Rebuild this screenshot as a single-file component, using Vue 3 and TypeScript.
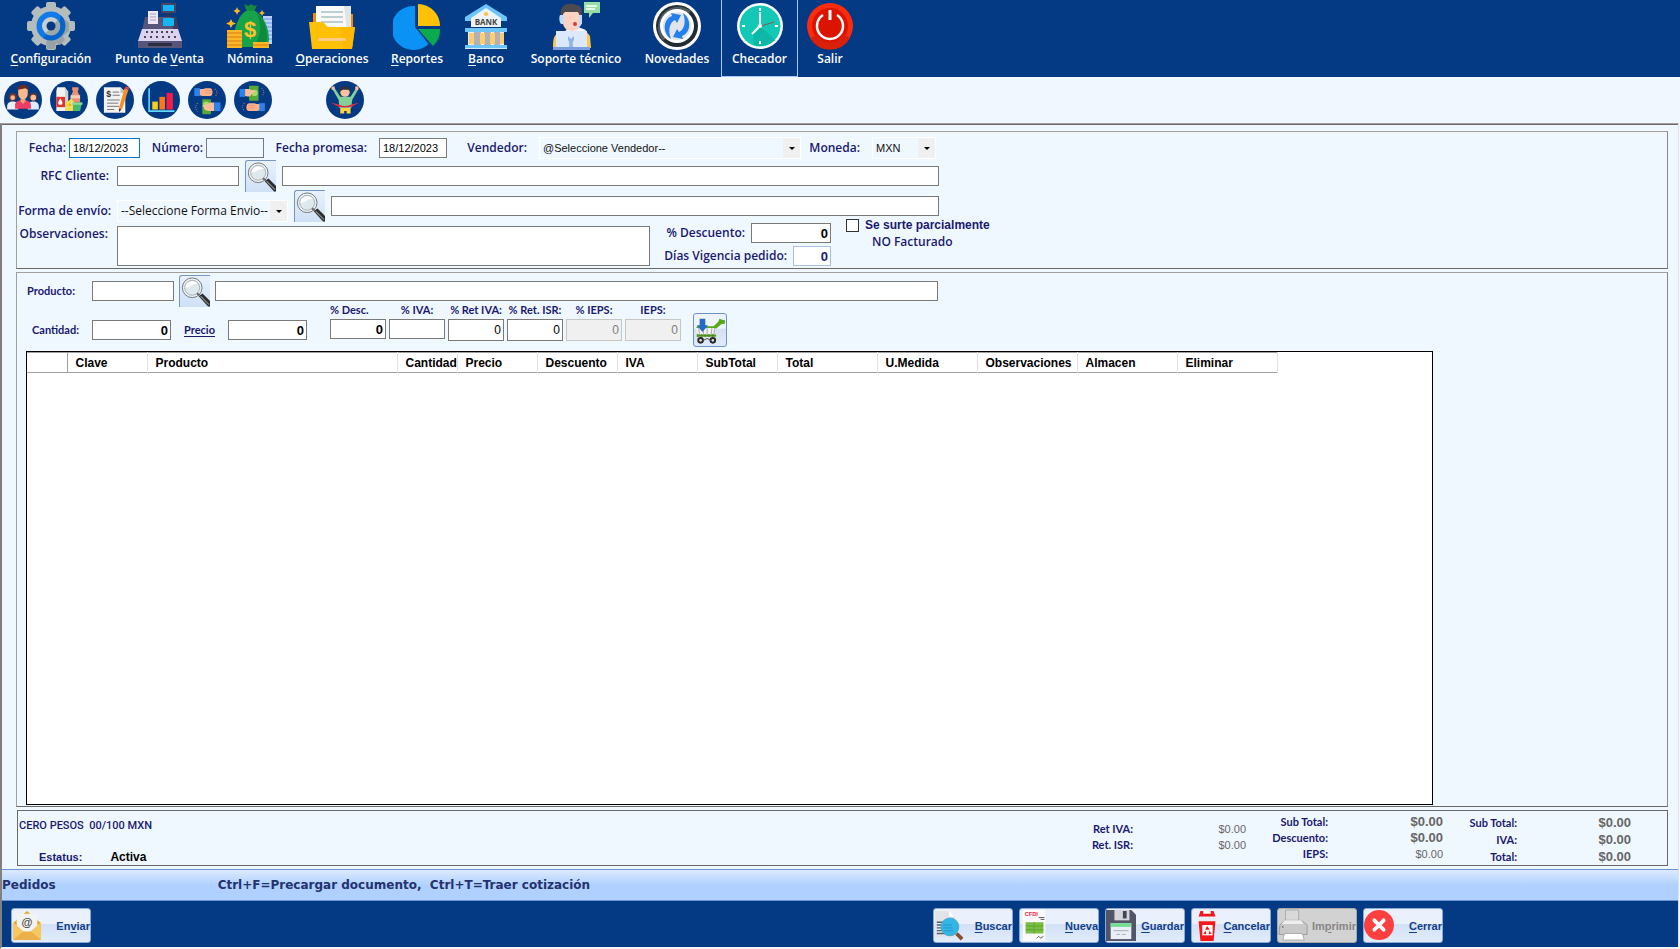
<script setup lang="ts">
import { ref } from 'vue'

interface MenuItem { pre: string; key: string; post: string; icon: string; active?: boolean }
interface ActionItem extends MenuItem { disabled?: boolean }

const icons: Record<string, string> = {
  gear: `<g fill="#b4bdbd"><circle cx="24" cy="24" r="20"/><rect x="19" y="0" width="10" height="48" rx="2"/><rect x="19" y="0" width="10" height="48" rx="2" transform="rotate(45 24 24)"/><rect x="19" y="0" width="10" height="48" rx="2" transform="rotate(90 24 24)"/><rect x="19" y="0" width="10" height="48" rx="2" transform="rotate(135 24 24)"/></g><path d="M33 13l9 8v8l-6 5 2 4-5 5-4-2-1 6h-8l-1-7z" fill="#98a3a5"/><circle cx="24" cy="24" r="14.500" fill="#1279e8"/><path d="M34 13.500A14.500 14.500 0 0 1 16 36l6-6 9-2 1-7z" fill="#0563c9"/><circle cx="24" cy="24" r="9" fill="#c9cfd0"/><path d="M30.500 18A9 9 0 0 1 18 31l4-3 4-5z" fill="#9ca7a9"/><circle cx="24" cy="24" r="4.500" fill="#053a82"/>`,
  register: `<rect x="25" y="1" width="15" height="10" rx="1" fill="#48455f"/><rect x="27" y="3" width="11" height="6" fill="#11b6fb"/><rect x="31" y="11" width="3" height="5" fill="#353247"/><path d="M9 15h31l2 14H6z" fill="#57557a"/><path d="M35 15h5l3 13h-6z" fill="#3f3c58"/><rect x="12" y="9" width="10" height="13" fill="#ece6f6"/><path d="M14 12h6M14 15h6M14 18h6" stroke="#a79fc2"/><rect x="27" y="16" width="11" height="8" rx="1" fill="#11b6fb"/><path d="M6 27h36l4 12H2z" fill="#dcd3ee"/><g fill="#48455f"><path d="M10 29h2v2h-2zM15 29h2v2h-2zM20 29h2v2h-2zM25 29h2v2h-2zM30 29h2v2h-2zM35 29h2v2h-2zM8 34h2v2H8zM14 34h2v2h-2zM20 34h2v2h-2zM26 34h2v2h-2zM32 34h2v2h-2zM38 34h2v2h-2z"/></g><path d="M2 39h44v7H2z" fill="#57557a"/><rect x="12" y="41" width="24" height="3" rx="1" fill="#2f2c42"/>`,
  money: `<g fill="#b9d2ff"><path d="M37 14h9v28h-9z"/></g><path d="M37 17h9M37 21h9M37 25h9M37 29h9M37 33h9M37 37h9" stroke="#6b97e8"/><path d="M18 2l4 2 3-2 3 2 3-1-3 7h-7z" fill="#138a3c"/><path d="M20 9h9c8 4 14 16 14 28 0 6-4 8-9 8H16c-6 0-8-3-8-9 0-11 5-23 12-27z" fill="#17a34a"/><path d="M30 10c7 5 11 15 11 26 0 5-3 8-7 9h-8c9-8 11-22 4-35z" fill="#0d8a3b"/><text x="24" y="35" text-anchor="middle" font-family="Liberation Sans" font-weight="700" font-size="22" fill="#fdc12e">$</text><g fill="#fbb824"><path d="M1 28h15v18H1zM27 40h16v6H27z"/><path d="M5 17l1.500 3L10 21.500 6.500 23 5 26l-1.500-3L0 21.500 3.500 20zM11 5l1 2.500L14.500 9 12 10.500 11 13l-1-2.500L7.500 9 10 7.500zM36 8l1 2 2 1-2 1-1 2-1-2-2-1 2-1z"/></g><path d="M1 31h15M1 35h15M1 39h15M1 43h15M27 43h16" stroke="#e2761b"/>`,
  folder: `<path d="M5 11h8v15H5zM36 12h9v15h-9z" fill="#f58a00"/><path d="M8 4h34v30H8z" fill="#fafafa"/><path d="M36 4h7v26h-4z" fill="#dfe5e5"/><path d="M13 10h22M13 15h22M13 20h22" stroke="#a7c3c4" stroke-width="1.500"/><path d="M1 20h14l5 5h27l-3 22H4z" fill="#fec107"/><path d="M32 25h15l-3 22h-8z" fill="#fdb900"/><rect x="10" y="36" width="28" height="3" rx="1" fill="#ffc987"/>`,
  pie: `<path d="M22 4a22 22 0 1 0 13.500 38L22 25z" fill="#0a92f5"/><path d="M25 2a22 22 0 0 1 22 22H25z" fill="#ffc107"/><path d="M25 27h22a22 22 0 0 1-7 17z" fill="#0aab4e"/>`,
  bank: `<path d="M24 2L3 15v4h42v-4z" fill="#6dc5fa"/><path d="M24 6L9 16v9h30v-9z" fill="#f0f3f5"/><circle cx="24" cy="12" r="2" fill="#f9c23b"/><text x="24" y="23" text-anchor="middle" font-family="Open Sans" font-weight="700" font-size="8" fill="#444">BANK</text><path d="M3 26h42v4H3z" fill="#6dc5fa"/><path d="M6 30h36v13H6z" fill="#eee"/><path d="M12 30h7v13h-7zM22 30h7v13h-7zM32 30h6v13h-6z" fill="#b4b0b4"/><path d="M7 31h5v11H7zM18 31h5v11h-5zM28 31h5v11h-5zM38 31h4v11h-4z" fill="#fbcf70"/><path d="M3 43h42v3H3z" fill="#6dc5fa"/><path d="M3 46h42v1H3z" fill="#cfeaff"/>`,
  support: `<path d="M32 0h16v11h-7l-4 5v-5h-5z" fill="#98dda6"/><path d="M34 4h11M34 7h9" stroke="#fff" stroke-width="1.500"/><path d="M5 32l10-4h18l5 6 1 12H1c0-6 0-12 4-14z" fill="#fbc94f"/><path d="M14 25h12l8 3-5 6H15z" fill="#f5f5fa"/><path d="M11 8c2-5 16-6 17 2v12c0 5-4 7-8 7s-9-3-9-8z" fill="#ffd3c2"/><path d="M9 14C7 0 20 1 24 3c6 0 7 6 5 13l-3-6H13z" fill="#4d4a50"/><path d="M8 13h4v9H9c-2-2-2-7-1-9zM27 13h3v9h-3z" fill="#c2dcff"/><path d="M29 20c0 4-3 5-6 5" stroke="#c2dcff" stroke-width="1.500" fill="none"/><circle cx="23" cy="22" r="2" fill="#d43c47"/><path d="M4 29h31v16H4z" fill="#dce8fb"/><path d="M16 34v4c2 2 1 5 1 8h4c0-3-1-6 1-8v-4l-3 3z" fill="#8fb4ee"/><path d="M1 45h37v3H1z" fill="#7c9fe0"/>`,
  news: `<circle cx="24" cy="24" r="24" fill="#fff"/><circle cx="24" cy="24" r="21" fill="#222c33"/><path d="M8 14A21 21 0 0 1 38 9L10 39A21 21 0 0 1 8 14z" fill="#4e5c60"/><circle cx="24" cy="24" r="17" fill="#fff"/><circle cx="24" cy="24" r="14" fill="#e1e5e9"/><g fill="#2480ed"><path d="M18 37C9 31 10 17 19 14l-1-3 10 2-4 8-2-3c-6 3-7 11-4 19z"/><path d="M30 11c9 6 8 20-1 23l1 3-10-2 4-8 2 3c6-3 7-11 4-19z"/></g>`,
  clock: `<circle cx="24" cy="24" r="23" fill="#fff"/><circle cx="24" cy="24" r="20.500" fill="#13c9b5"/><path d="M24 24L39 38A20.500 20.500 0 0 1 18 43l-1-12z" fill="#0eb8a7"/><path d="M24 6v3M24 39v3M6 24h3M39 24h3" stroke="#fff" stroke-width="2"/><path d="M24 10v14l-8 8" stroke="#fff" stroke-width="2" fill="none"/><path d="M22 25l16-5" stroke="#7c5a50"/><circle cx="24" cy="24" r="2" fill="#fff"/>`,
  power: `<circle cx="24" cy="24" r="23" fill="#fb2c0c"/><circle cx="24" cy="24" r="18" fill="#db1400"/><path d="M4 36a23 23 0 0 0 40 0l-6-3a17 17 0 0 1-28 0z" fill="#d92009"/><path d="M17 13a13 13 0 1 0 14 0" stroke="#fff" stroke-width="2.500" fill="none"/><path d="M24 8v10" stroke="#fff" stroke-width="3"/>`,
  people: `<circle cx="11" cy="20" r="5" fill="#713628"/><circle cx="11" cy="21" r="3" fill="#f6b891"/><path d="M4 36v-4c0-4 3-6 7-6s7 2 7 6v4z" fill="#eceff5"/><circle cx="37" cy="20" r="5" fill="#713628"/><circle cx="37" cy="21" r="3.500" fill="#f9c39b"/><path d="M30 36v-4c0-4 3-6 7-6s7 2 7 6v4z" fill="#dcebff"/><path d="M14 35v-5c0-4 5-6 10-6s10 2 10 6v5z" fill="#ec3e64"/><path d="M21 20h6v6l-3 3-3-3z" fill="#eca06f"/><path d="M17 9c2-6 12-5 14-1l-1 8h-12z" fill="#682c22"/><path d="M18 11l9-2 3 2v5c0 4-3 7-6 7s-6-3-6-7z" fill="#fbb888"/>`,
  groceries: `<path d="M9 8h10l3 5v25H8V13z" fill="#f3f1ec"/><path d="M18 8l5 5v25h-4V13z" fill="#ccd2d2"/><path d="M8 20h11v13H8z" fill="#e6332a"/><path d="M13 22c4 5 3 8 0 8s-4-3 0-8z" fill="#fff"/><path d="M28 8h8v4h-1c0 4 3 5 3 9v6H26v-6c0-4 3-5 3-9h-1z" fill="#e89070"/><path d="M26 18h12v4H26z" fill="#f3cdb8"/><path d="M20 38V28l7-6 5 7v9z" fill="#f8dc4d"/><circle cx="25" cy="30" r="1.500" fill="#dfae1f"/><path d="M29 29h11l-2 9H29z" fill="#49bb70"/><path d="M28 27h13v3H28z" fill="#8bdd9c"/>`,
  invoice: `<path d="M10 8h21l6 6v26H10z" fill="#f3f2f0"/><path d="M31 8v7h6z" fill="#bdc0c9"/><text x="13" y="20" font-family="Liberation Sans" font-size="11" font-weight="700" fill="#333">$</text><path d="M21 14h8M21 18h9M14 24h16M14 28h14M14 32h15M14 36h9" stroke="#555964"/><path d="M36 9l5 2-8 24-3 3-1-4z" fill="#f68d27"/><path d="M36 9l5 2 1-3-4-1z" fill="#e2453e"/><path d="M29 35l3 1-3 3z" fill="#333"/>`,
  bars: `<path d="M9 9v29h32" stroke="#62d7ff" stroke-width="2" fill="none"/><path d="M13 26h7v10h-7z" fill="#f7cf1a"/><path d="M22 20h7v16h-7z" fill="#ff7816"/><path d="M31 15h8v21h-8z" fill="#f51d47"/>`,
  payDown: `<rect x="8" y="9" width="7" height="10" fill="#2b83eb"/><path d="M15 10h4l3-1h6c4 0 4 10 0 10H18l-3-1z" fill="#fbb28c"/><path d="M22 12h8M22 15h8" stroke="#e58e6c"/><rect x="18" y="23" width="11" height="19" rx="1" fill="#55a934"/><circle cx="23" cy="30" r="4" fill="#a8d96b"/><path d="M33 27h-5c-2 2-5 3-8 3-2 1-2 2 0 3 0 4 5 5 8 5h5z" fill="#fbbd9a"/><rect x="33" y="27" width="8" height="11" fill="#2b83eb"/><path d="M34 10l3 4-2 5M12 28l-3 5 3 6" stroke="#c08067" stroke-width="1.500" stroke-dasharray="1 2" fill="none"/>`,
  payUp: `<rect x="7" y="10" width="7" height="10" fill="#2b83eb"/><rect x="19" y="6" width="12" height="19" rx="1" fill="#55a934"/><circle cx="26" cy="15" r="4" fill="#a8d96b"/><path d="M14 10h5l5 2c3 0 3 3 0 3l-2 1c0 4-5 4-8 3z" fill="#fbbd9a"/><path d="M33 29h-5l-2-1h-7c-4 0-5 10 0 10h10l4-1z" fill="#fbb28c"/><path d="M18 31h8M18 34h8" stroke="#e58e6c"/><rect x="32" y="28" width="7" height="10" fill="#2b83eb"/><path d="M35 9l3 4-2 6M13 28l-3 5 3 5" stroke="#c08067" stroke-width="1.500" stroke-dasharray="1 2" fill="none"/>`,
  winner: `<path d="M8 10l3-1 7 11h13l7-11 3 1-8 14-1 10H17l-1-10z" fill="#86cf96"/><path d="M7 7h4v4H7zM37 7h4v4h-4z" fill="#ffc29d"/><circle cx="24" cy="14" r="6" fill="#ffc29d"/><path d="M17 14c-1-10 15-10 14 0l-3-3h-7z" fill="#333238"/><path d="M18 34h13v7h-5v-3h-3v3h-5z" fill="#ffd33e"/><path d="M6 27l11 3c5 2 9 2 14 0l11-3-8 5c-7 2-13 2-20 0z" fill="#db2d45"/>`,
  lens: `<path d="M20 21l4-3 8 8v6h-2z" fill="#292b2d"/><path d="M22 21l9 9" stroke="#82888a" stroke-width="1.500"/><circle cx="13" cy="12" r="10.500" fill="#edf3f4" stroke="#6d7477"/><circle cx="13" cy="12" r="8" fill="#dde9ec" stroke="#a5adaf"/><path d="M6 12c0-8 10-9 13-4-6-1-8 4-13 4z" fill="#fff"/><path d="M18 18l3 2" stroke="#666" stroke-width="2"/>`,
  cart: `<path d="M3 12h18l5-5 1-3 3 1 3 1v3l-4 1-6 5H2z" fill="#57a819"/><path d="M2 14h21l-1 10H4z" fill="#f1f2ee"/><path d="M5 14l1 9M10 14v9M14 14v9M19 14l-1 9M22 14l-1 9" stroke="#a3a8a1"/><path d="M3 21h20v2H3z" fill="#4f8f1f" stroke="#4f8f1f" stroke-dasharray="2 2"/><g fill="#ddd" stroke="#262626" stroke-width="2"><circle cx="7" cy="27" r="2.500"/><circle cx="20" cy="27" r="2.500"/></g><path d="M10 27l4-2 4 2" stroke="#444" fill="none"/><path d="M6 4h6v7h3l-6 7-6-7h3z" fill="#236ac6"/>`,
  mail: `<path d="M1 14L16 1l15 13-15 9z" fill="#e9a520"/><path d="M5 4h22v21H5z" fill="#f3f3f3"/><path d="M1 13l15 13 15-13v19H1z" fill="#f7c860"/><path d="M1 32l11-9h8l11 9z" fill="#ebb049"/><text x="16" y="17" text-anchor="middle" font-family="Liberation Sans" font-size="12" fill="#4c4c4c">@</text>`,
  find: `<path d="M1 1h15l6 6v22H1z" fill="#e1e4e9"/><path d="M16 1v6h6z" fill="#fff"/><path d="M3 13h14M3 16h13M3 19h12M3 22h12M3 25h13" stroke="#556070" stroke-width="1.500"/><path d="M24 25l6 6" stroke="#8a4e2c" stroke-width="4"/><circle cx="17" cy="18" r="9.500" fill="#31b6e5" stroke="#4aa6cf"/><path d="M10 16h9M10 19h10M11 22h9" stroke="#2695c8"/>`,
  fresh: `<path d="M3 0h24v33H3z" fill="#fafafa"/><text x="5" y="6" font-family="Liberation Sans" font-weight="700" font-size="6" fill="#eb203b">CFDI</text><path d="M20 8h6M22 10h4M18 30l2-2 2 2 3-2" stroke="#565656" fill="none"/><path d="M6 13h19v12H6z" fill="#7cbd45"/><path d="M6 17h19M6 21h19M15 13v12" stroke="#5ba52c"/>`,
  disk: `<path d="M0 0h27l5 5v28H0z" fill="#535467"/><path d="M9 0h16v11H9z" fill="#d5d6dd"/><path d="M18 1h4v8h-4z" fill="#434455"/><path d="M5 14h22v17H5z" fill="#e9eff4"/><path d="M5 14h22v4H5z" fill="#75dc96"/><path d="M8 22h16M11 26h4M17 26h4" stroke="#a6acbb"/>`,
  bin: `<path d="M7 7l2-6h14l2 6z" fill="#ee1818"/><path d="M12 0h8v4h-8z" fill="#fff"/><path d="M5 8h22v4H5z" fill="#e5f0f6"/><path d="M7 12h18l-2 21H9z" fill="#f21a1a"/><path d="M11 16h11v11H11z" fill="#fff"/><path d="M16 17l3 4h-5zM12 25l3-3v4zM21 25l-3-3v4z" fill="#ee1818"/>`,
  printer: `<path d="M8 0h14v14H8z" fill="#d9d9d9" stroke="#aaa"/><path d="M2 16l5-5h18l6 5v10H1z" fill="#c9c9c9" stroke="#999"/><path d="M7 11h18l2 4H4z" fill="#eee"/><path d="M7 25h19l2 7H5z" fill="#fff" stroke="#aaa"/><circle cx="5" cy="18" r="1" fill="#777"/>`,
  close: `<circle cx="16" cy="16" r="16" fill="#fc4040"/><path d="M11 11l10 10M21 11L11 21" stroke="#fff" stroke-width="4" stroke-linecap="round"/>`,
}

const menu: MenuItem[] = [
  { pre: '', key: 'C', post: 'onfiguración', icon: 'gear' },
  { pre: 'Punto de ', key: 'V', post: 'enta', icon: 'register' },
  { pre: 'Nómina', key: '', post: '', icon: 'money' },
  { pre: '', key: 'O', post: 'peraciones', icon: 'folder' },
  { pre: '', key: 'R', post: 'eportes', icon: 'pie' },
  { pre: '', key: 'B', post: 'anco', icon: 'bank' },
  { pre: 'Soporte técnico', key: '', post: '', icon: 'support' },
  { pre: 'Novedades', key: '', post: '', icon: 'news' },
  { pre: 'Checador', key: '', post: '', icon: 'clock', active: true },
  { pre: 'Salir', key: '', post: '', icon: 'power' },
]

const shortcuts = [
  { icon: 'people', name: 'Clientes' },
  { icon: 'groceries', name: 'Productos' },
  { icon: 'invoice', name: 'Facturas' },
  { icon: 'bars', name: 'Estadísticas' },
  { icon: 'payDown', name: 'Cuentas por cobrar' },
  { icon: 'payUp', name: 'Cuentas por pagar' },
  { icon: 'winner', name: 'Metas' },
]

const actions: ActionItem[] = [
  { pre: '', key: 'B', post: 'uscar', icon: 'find' },
  { pre: '', key: 'N', post: 'ueva', icon: 'fresh' },
  { pre: '', key: 'G', post: 'uardar', icon: 'disk' },
  { pre: '', key: 'C', post: 'ancelar', icon: 'bin' },
  { pre: 'Im', key: 'p', post: 'rimir', icon: 'printer', disabled: true },
  { pre: '', key: 'C', post: 'errar', icon: 'close' },
]

const columns = [
  { name: '', width: 40 }, { name: 'Clave', width: 80 }, { name: 'Producto', width: 250 },
  { name: 'Cantidad', width: 60 }, { name: 'Precio', width: 80 }, { name: 'Descuento', width: 80 },
  { name: 'IVA', width: 80 }, { name: 'SubTotal', width: 80 }, { name: 'Total', width: 100 },
  { name: 'U.Medida', width: 100 }, { name: 'Observaciones', width: 100 },
  { name: 'Almacen', width: 100 }, { name: 'Eliminar', width: 100 },
]

const taxes = ref([
  { id: 'desc', label: '% Desc.', value: '0', kind: 'strong' },
  { id: 'iva', label: '% IVA:', value: '', kind: 'strong' },
  { id: 'retiva', label: '% Ret IVA:', value: '0', kind: 'tall' },
  { id: 'retisr', label: '% Ret. ISR:', value: '0', kind: 'tall' },
  { id: 'pieps', label: '% IEPS:', value: '0', kind: 'off' },
  { id: 'ieps', label: 'IEPS:', value: '0', kind: 'off' },
])

const totals = [
  { cls: 'retentions', rows: [['Ret IVA:', '$0.00'], ['Ret. ISR:', '$0.00']] },
  { cls: 'partials', rows: [['Sub Total:', '$0.00'], ['Descuento:', '$0.00'], ['IEPS:', '$0.00']] },
  { cls: 'finals', rows: [['Sub Total:', '$0.00'], ['IVA:', '$0.00'], ['Total:', '$0.00']] },
]

const fecha = ref('18/12/2023')
const promesa = ref('18/12/2023')
const parcial = ref(false)
</script>

<template>
  <div class="app">
    <nav class="menu">
      <button v-for="m in menu" :key="m.icon" type="button" class="menu-item" :class="{ active: m.active }">
        <svg viewBox="0 0 48 48" aria-hidden="true" v-html="icons[m.icon]"></svg>
        <span>{{ m.pre }}<u v-if="m.key">{{ m.key }}</u>{{ m.post }}</span>
      </button>
    </nav>

    <div class="shortcuts">
      <button v-for="s in shortcuts" :key="s.icon" type="button" class="round" :class="s.icon" :aria-label="s.name">
        <svg viewBox="0 0 48 48" aria-hidden="true" v-html="icons[s.icon]"></svg>
      </button>
    </div>

    <main class="window">
      <form class="content" @submit.prevent>
        <section class="panel header-panel">
          <div class="row row-dates">
            <label for="fecha">Fecha:</label>
            <input id="fecha" v-model="fecha" class="focus" type="text">
            <label for="numero">Número:</label>
            <input id="numero" class="locked" type="text" readonly>
            <label class="spaced" for="promesa">Fecha promesa:</label>
            <input id="promesa" v-model="promesa" type="text">
            <label class="spaced" for="vendedor">Vendedor:</label>
            <span class="combo">
              <select id="vendedor"><option>@Seleccione Vendedor--</option></select>
              <i class="arrow"></i>
            </span>
            <label class="spaced" for="moneda">Moneda:</label>
            <span class="combo">
              <select id="moneda"><option>MXN</option></select>
              <i class="arrow"></i>
            </span>
          </div>

          <div class="row row-client">
            <label for="rfc">RFC Cliente:</label>
            <input id="rfc" type="text">
            <button type="button" class="search" aria-label="Buscar cliente">
              <svg viewBox="0 0 32 32" aria-hidden="true" v-html="icons.lens"></svg>
            </button>
            <input type="text" aria-label="Nombre del cliente">
          </div>

          <div class="row row-shipping">
            <label class="low" for="envio">Forma de envío:</label>
            <span class="combo low wide-text">
              <select id="envio"><option>--Seleccione Forma Envio--</option></select>
              <i class="arrow"></i>
            </span>
            <button type="button" class="search" aria-label="Buscar forma de envío">
              <svg viewBox="0 0 32 32" aria-hidden="true" v-html="icons.lens"></svg>
            </button>
            <input type="text" aria-label="Detalle del envío">
          </div>

          <div class="row row-notes">
            <label class="top-label" for="obs">Observaciones:</label>
            <textarea id="obs"></textarea>
            <div class="mini-fields">
              <div>
                <label for="descuento">% Descuento:</label>
                <input id="descuento" class="num" type="text" value="0">
              </div>
              <div>
                <label for="vigencia">Días Vigencia pedido:</label>
                <input id="vigencia" class="num pale" type="text" value="0">
              </div>
            </div>
            <div class="flags">
              <label class="check"><input v-model="parcial" type="checkbox">Se surte parcialmente</label>
              <span class="invoiced">NO Facturado</span>
            </div>
          </div>
        </section>

        <section class="panel product-panel">
          <div class="row row-product">
            <label for="producto">Producto:</label>
            <input id="producto" type="text">
            <button type="button" class="search" aria-label="Buscar producto">
              <svg viewBox="0 0 32 32" aria-hidden="true" v-html="icons.lens"></svg>
            </button>
            <input type="text" aria-label="Descripción del producto">
          </div>

          <div class="row row-amounts">
            <label for="cantidad">Cantidad:</label>
            <input id="cantidad" class="num" type="text" value="0">
            <label for="precio"><u>Precio</u></label>
            <input id="precio" class="num" type="text" value="0">
            <div class="taxes">
              <div v-for="t in taxes" :key="t.id" class="tax" :class="t.kind">
                <label :for="t.id">{{ t.label }}</label>
                <input :id="t.id" v-model="t.value" type="text" :disabled="t.kind === 'off'">
              </div>
            </div>
            <button type="button" class="cart" aria-label="Agregar producto">
              <svg viewBox="0 0 34 32" aria-hidden="true" v-html="icons.cart"></svg>
            </button>
          </div>

          <div class="grid">
            <table>
              <colgroup><col v-for="c in columns" :key="c.name" :style="{ width: c.width + 'px' }"></colgroup>
              <thead><tr><th v-for="c in columns" :key="c.name" scope="col">{{ c.name }}</th></tr></thead>
            </table>
          </div>
        </section>

        <section class="panel totals-panel">
          <div class="summary">
            <p class="words">CERO PESOS&nbsp; 00/100 MXN</p>
            <p class="state"><span>Estatus:</span><strong>Activa</strong></p>
          </div>
          <dl v-for="t in totals" :key="t.cls" :class="t.cls">
            <template v-for="r in t.rows" :key="r[0]"><dt>{{ r[0] }}</dt><dd>{{ r[1] }}</dd></template>
          </dl>
        </section>
      </form>

      <div class="status"><span>Pedidos</span><span>Ctrl+F=Precargar documento,&nbsp; Ctrl+T=Traer cotización</span></div>

      <footer class="actions">
        <button type="button" class="action">
          <svg viewBox="0 0 32 33" aria-hidden="true" v-html="icons.mail"></svg>
          <span>En<u>v</u>iar</span>
        </button>
        <div class="action-group">
          <button v-for="a in actions" :key="a.icon" type="button" class="action" :disabled="a.disabled">
            <svg viewBox="0 0 32 33" aria-hidden="true" v-html="icons[a.icon]"></svg>
            <span>{{ a.pre }}<u>{{ a.key }}</u>{{ a.post }}</span>
          </button>
        </div>
      </footer>
    </main>
  </div>
</template>

<style>
html, body { margin: 0; background: #f0f8ff; }
</style>

<style scoped>
* { box-sizing: border-box; }
.app { min-height: 100vh; display: flex; flex-direction: column; background: #f0f7ff; color: #191970; font: 600 12px/16px "Open Sans", "Noto Sans", sans-serif; }
button, input, select, textarea { font: inherit; margin: 0; }

.menu { display: grid; grid-template-columns: 102px 115px 66px 98px 72px 66px 114px 88px 77px 64px; height: 77px; background: #043a84; }
.menu-item { display: flex; flex-direction: column; align-items: center; padding: 2px 0 0; border: 1px solid transparent; border-top: 0; background: none; color: #fff; line-height: 18px; white-space: nowrap; }
.menu-item.active { border-color: #a9c9f5; }
.menu-item svg { width: 48px; height: 48px; }
u { text-underline-offset: 2px; }

.shortcuts { display: flex; gap: 8px; padding: 4px; height: 46px; }
.round { width: 38px; height: 38px; padding: 0; border: 0; border-radius: 50%; background: #043a84; }
.round svg { display: block; width: 38px; height: 38px; }
.round.winner { margin-left: 46px; }

.window { flex: 1; display: flex; flex-direction: column; margin-right: 1px; border: 2px solid #808080; border-top: 1px solid #a0a0a0; border-right: 1px solid #e3e3e3; border-bottom-color: #f4f4f4; background: #f0f8ff; }
.content { flex: 1; display: flex; flex-direction: column; gap: 3px; padding: 6px 10px 3px 14px; border-top: 1px solid #696969; }
.panel { border: 1px solid #a0a0a0; border-bottom-color: #696969; border-right-color: #888; }

.row { display: grid; align-items: center; }
.row label { text-align: right; white-space: nowrap; }
input[type="text"], textarea { width: 100%; height: 20px; padding: 0 3px; border: 1px solid #7a7a7a; border-radius: 0; background: #fff; color: #000; font: 400 11px/16px "Liberation Sans", Arial, sans-serif; outline: 0; }
input.focus { border-color: #0078d7; }
input.locked { background: #f0f8ff; }
input.num { padding-right: 2px; font-size: 13px; font-weight: 700; text-align: right; }
input.pale { color: #191970; border-color: #a9c0e0; }
textarea { display: block; height: 40px; resize: none; }

.header-panel { padding: 4px 0 2px; }
.row-dates { grid-template-columns: 52px 71px 66px 58px 115px 68px 92px 262px 71px 64px; height: 24px; }
.row-dates label { padding-right: 3px; }
.row-dates .spaced { padding-right: 12px; }
.row-client { grid-template-columns: 94px 122px 31px minmax(200px, 657px); column-gap: 6px; height: 30px; }
.row-client label { padding-right: 2px; }
.row-shipping { grid-template-columns: 94px 171px 31px minmax(200px, 608px); column-gap: 6px; height: 28px; }
.low { align-self: end; }
label.low { line-height: 22px; }
.search { height: 32px; width: 31px; padding: 0; border: 0; border-top: 1px solid #7595c4; border-left: 1px solid #7595c4; border-top-left-radius: 3px; background: linear-gradient(#e9f1fd, #cfe0f6); }
.search svg { display: block; width: 30px; height: 31px; }

.combo { display: grid; grid-template-columns: 1fr 17px; height: 22px; border: 1px solid #fff; }
.combo select { grid-area: 1 / 1 / 2 / 3; width: 100%; appearance: none; border: 0; border-radius: 0; padding: 0 3px; background: #f0f8ff; color: #111; font: 400 11px/20px "Liberation Sans", Arial, sans-serif; outline: 0; }
.combo.wide-text select { font-family: "Open Sans", sans-serif; font-size: 12px; }
.arrow { grid-area: 1 / 2 / 2 / 3; display: grid; place-items: center; background: #f0f0f0; pointer-events: none; }
.arrow::before { content: ""; border: 3px solid transparent; border-top-color: #000; border-bottom: 0; }

.row-notes { grid-template-columns: 94px 533px 175px auto; column-gap: 6px; height: 48px; align-items: end; justify-content: start; }
.top-label { align-self: start; padding: 6px 3px 0 0; line-height: 20px; }
.mini-fields { display: grid; row-gap: 3px; }
.mini-fields > div { display: flex; justify-content: flex-end; gap: 6px; }
.mini-fields label { line-height: 20px; }
#descuento { width: 80px; }
#vigencia { width: 38px; }
.flags { align-self: start; padding-left: 9px; }
.check { display: flex; align-items: center; gap: 6px; height: 15px; font: 700 12px/15px "Liberation Sans", Arial, sans-serif; }
.check input { appearance: none; width: 13px; height: 13px; border: 1px solid #333; background: #fff; }
.invoiced { display: block; padding-left: 26px; line-height: 18px; }

.product-panel { flex: 1; display: flex; flex-direction: column; padding: 2px 234px 1px 9px; }
.product-panel label { font: 700 11px/16px Lato, "Open Sans", sans-serif; }
.row-product { grid-template-columns: 61px 82px 31px minmax(200px, 723px); height: 30px; column-gap: 5px; }
.row-product label { padding-right: 12px; }
.row-amounts { grid-template-columns: 66px 79px 57px 79px auto 34px; height: 46px; align-items: end; justify-content: start; padding-bottom: 4px; }
.row-amounts > label { line-height: 20px; padding-right: 13px; margin-bottom: 7px; }
.row-amounts > input { margin-bottom: 7px; }
.taxes { display: flex; gap: 3px; margin: 0 12px 0 23px; align-self: start; }
.tax { width: 56px; }
.row .tax label { display: block; height: 14px; line-height: 10px; text-align: center; }
.row .tax:first-child label { text-align: left; }
.tax input { padding-right: 2px; text-align: right; }
.tax.strong input { font-size: 13px; font-weight: 700; }
.tax:not(.strong) input { height: 22px; font-size: 12px; }
.tax.off input { background: #f0f0f0; border: 1px solid #c6c6c6; color: #7d7d7d; }
.cart { width: 34px; height: 34px; padding: 0; border: 1px solid #6d93c6; border-radius: 3px; background: linear-gradient(#eef4fd 45%, #d4e2f5 46%, #dfeafa); }
.cart svg { display: block; width: 32px; height: 32px; }

.grid { flex: 1; min-height: 120px; border: 1px solid #000; background: #fff; overflow: hidden; }
table { width: 1250px; table-layout: fixed; border-collapse: collapse; border-bottom: 1px solid #a0a0a0; border-top: 1px solid #a0a0a0; }
th { height: 20px; padding: 0 0 0 8px; border-right: 1px solid #e2e2e2; color: #000; font: 700 12px/18px "Liberation Sans", Arial, sans-serif; text-align: left; white-space: nowrap; }
th:first-child { border-right-color: #a0a0a0; }

.totals-panel { display: flex; height: 56px; padding-right: 36px; border-color: #696969; margin-left: 1px; }
.summary { flex: 1; }
p { margin: 0; }
.words { padding: 6px 0 0 1px; font: 500 11px/18px Roboto, sans-serif; }
.state { display: flex; gap: 28px; padding: 14px 0 0 21px; font: 700 12px/16px "Liberation Sans", Arial, sans-serif; }
.state span { font-size: 11px; }
.state strong { color: #000; }
dl { display: grid; align-content: start; margin: 0; padding-top: 3px; font: 700 11px/17px Lato, sans-serif; text-align: right; }
dd { margin: 0; color: #666; font: 700 13px/17px "Liberation Sans", Arial, sans-serif; }
.retentions { grid-template-columns: 50px 113px; padding-top: 10px; line-height: 16px; }
.retentions dd, .partials dd:last-child { font-weight: 400; font-size: 11px; }
.retentions dd { line-height: 16px; }
.partials { grid-template-columns: 82px 115px; line-height: 16px; }
.partials dd { line-height: 16px; }
.finals { grid-template-columns: 74px 114px; }

.status { display: flex; gap: 162px; height: 32px; border-top: 1px solid #6a94cd; border-bottom: 1px solid #6a94cd; background: linear-gradient(#dceafe, #b0d1ff 50%, #b0d1ff); color: #24326e; font: 700 12px/30px "DejaVu Sans", sans-serif; }
.actions { display: flex; justify-content: space-between; height: 46px; padding: 7px 235px 0 9px; background: #043a84; }
.action-group { display: flex; gap: 6px; }
.action { display: flex; align-items: center; justify-content: space-between; width: 80px; height: 35px; padding: 0; border: 1px solid #8ba9d5; border-radius: 3px; background: linear-gradient(#eaf1fd 45%, #d2e1f5 46%, #e2ecfb); color: #123f8c; font: 700 11px/16px "Liberation Sans", Arial, sans-serif; }
.action svg { width: 30px; height: 33px; flex: none; }
.action:disabled { background: #d2d2d2; border-color: #aaa; color: #868686; }
</style>
